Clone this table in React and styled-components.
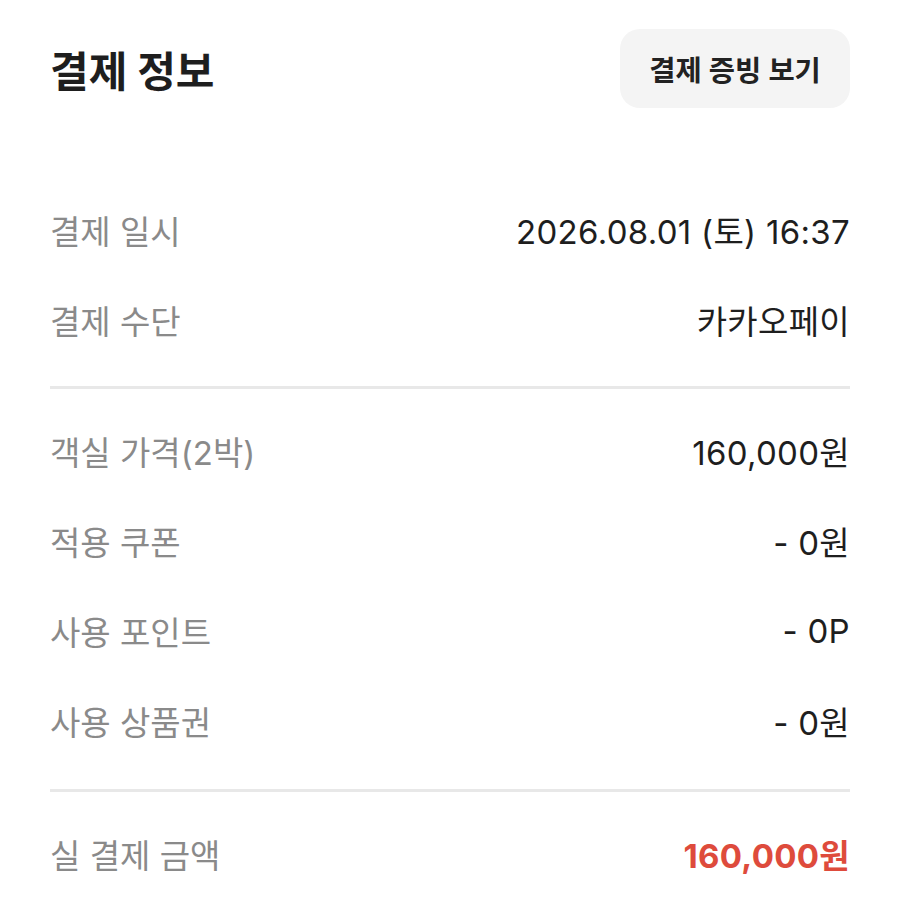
import React from "react";
import styled, { createGlobalStyle } from "styled-components";

const Global = createGlobalStyle`
  html, body { margin: 0; padding: 0; background: #fff; }
  body { font-family: Inter, "Noto Sans CJK KR", sans-serif; -webkit-font-smoothing: antialiased; }
`;

const Page = styled.div`
  padding: 29px 50px 0;
  display: flex;
  flex-direction: column;
`;

const Header = styled.div`
  display: flex;
  align-items: center;
  justify-content: space-between;
  height: 79px;
  margin-bottom: 77px;
`;

const Title = styled.h1`
  margin: 0;
  font-size: 42px;
  font-weight: 700;
  color: #1e1e1e;
`;

const ProofButton = styled.button`
  height: 79px;
  width: 230px;
  padding: 0;
  border: none;
  border-radius: 20px;
  background: #f4f4f4;
  font-family: inherit;
  font-size: 28.5px;
  font-weight: 600;
  color: #222;
`;

const Section = styled.div`
  display: flex;
  flex-direction: column;
`;

const Row = styled.div`
  display: flex;
  align-items: center;
  justify-content: space-between;
  height: 90px;
  font-size: 33px;
`;

const Label = styled.span`
  color: #8a8a8a;
`;

const Value = styled.span`
  letter-spacing: 0.3px;
  color: ${(p) => (p.$accent ? "#de4b3c" : "#1e1e1e")};
  font-weight: ${(p) => (p.$accent ? 700 : 400)};
`;

const Divider = styled.hr`
  margin: ${(p) => (p.$last ? "23px 0 17px" : "21px 0 17px")};
  border: none;
  height: 3px;
  background: #e8e8e8;
`;

export default function App() {
  return (
    <>
      <Global />
      <Page>
        <Header>
          <Title>결제 정보</Title>
          <ProofButton>결제 증빙 보기</ProofButton>
        </Header>
        <Section>
          <Row><Label>결제 일시</Label><Value>2026.08.01 (토) 16:37</Value></Row>
          <Row><Label>결제 수단</Label><Value>카카오페이</Value></Row>
        </Section>
        <Divider />
        <Section>
          <Row><Label>객실 가격(2박)</Label><Value>160,000원</Value></Row>
          <Row><Label>적용 쿠폰</Label><Value>- 0원</Value></Row>
          <Row><Label>사용 포인트</Label><Value>- 0P</Value></Row>
          <Row><Label>사용 상품권</Label><Value>- 0원</Value></Row>
        </Section>
        <Divider $last />
        <Section>
          <Row><Label>실 결제 금액</Label><Value $accent>160,000원</Value></Row>
        </Section>
      </Page>
    </>
  );
}
